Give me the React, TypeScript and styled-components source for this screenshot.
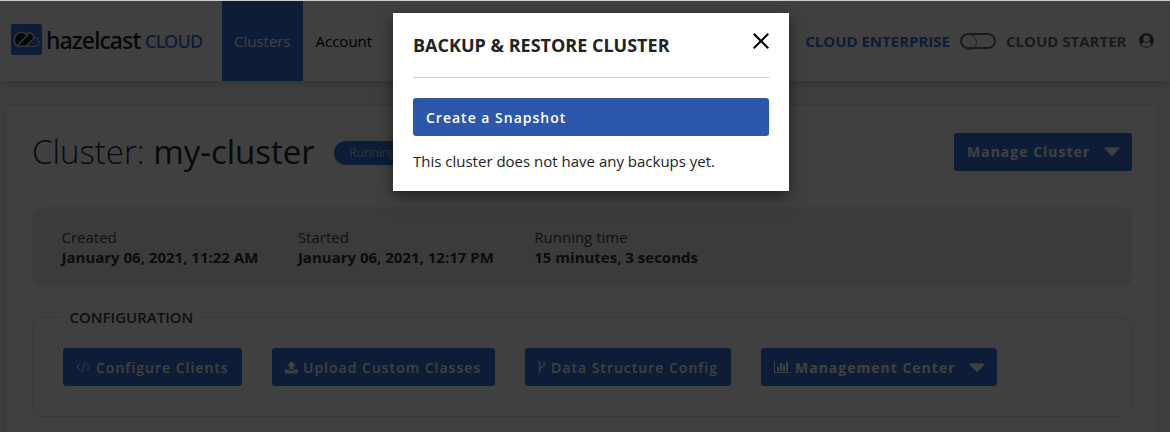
import React from "react";
import styled, { createGlobalStyle } from "styled-components";

const Global = createGlobalStyle`
  * { box-sizing: border-box; }
  body { margin: 0; background: #f7f7f7; font-family: "Open Sans", sans-serif; font-size: 15px; line-height: 20px; color: #464646; overflow: hidden; }
  h1, h2, p, dl, dt, dd, fieldset, legend { margin: 0; padding: 0; }
  button { font-family: inherit; border: 0; }
`;

const BLUE = "#3671da";

const Page = styled.div`
  height: 432px;
  overflow: hidden;
  background: #f7f7f7;
`;
const Header = styled.header`
  position: relative;
  height: 81px;
  padding: 1px 16.5px 0 11px;
  display: flex;
  align-items: stretch;
  background: #fff;
  box-shadow: 0 2px 10px rgba(0, 0, 0, 0.2);
`;
const Brand = styled.div`
  width: 211px;
  display: flex;
  align-items: center;
  padding-bottom: 4px;
`;
const BrandName = styled.span`
  width: 93px;
  margin-left: 4px;
  padding-top: 1px;
  font: 500 23px/28px "Noto Sans", sans-serif;
  letter-spacing: -0.9px;
  color: #12182a;
`;
const BrandSuffix = styled.span`
  margin-left: 6px;
  padding-top: 3px;
  font: 500 18px/28px "Noto Sans", sans-serif;
  letter-spacing: -0.8px;
  color: ${BLUE};
`;
const NavItem = styled.a<{ $active?: boolean }>`
  display: flex;
  align-items: center;
  width: ${(p) => (p.$active ? "81px" : "80px")};
  padding: 0 0 0 ${(p) => (p.$active ? "12px" : "12.5px")};
  font-size: 15px;
  background: ${(p) => (p.$active ? BLUE : "transparent")};
  color: ${(p) => (p.$active ? "#fff" : "#000")};
`;
const Plans = styled.div`
  margin-left: auto;
  display: flex;
  align-items: center;
  font-size: 15px;
  font-weight: 700;
`;
const Plan = styled.span<{ $active?: boolean }>`
  color: ${(p) => (p.$active ? BLUE : "#6c6c6c")};
`;
const Toggle = styled.span`
  display: block;
  width: 36px;
  height: 16px;
  margin: 0 10px;
  border: 2px solid #6c6c6c;
  border-radius: 8px;
  &::after {
    content: "";
    display: block;
    width: 14px;
    height: 14px;
    margin: -1px 0 0 -1px;
    border: 1px solid #7c7c7c;
    border-radius: 50%;
  }
`;
const Card = styled.main`
  width: 1150px;
  height: 360px;
  margin: 25px 0 0 7px;
  padding: 27px 25px 0;
  background: #fff;
  box-shadow: 0 0 8px rgba(0, 0, 0, 0.12);
`;
const TitleRow = styled.div`
  display: flex;
  align-items: flex-start;
  justify-content: space-between;
  height: 74px;
`;
const TitleGroup = styled.div`
  display: flex;
  align-items: center;
  height: 38px;
`;
const Title = styled.h1`
  font-size: 33px;
  line-height: 38px;
  font-weight: 300;
  color: #2b2b2b;
  white-space: nowrap;
  b { font-weight: 400; }
`;
const Status = styled.span`
  height: 24px;
  margin: 2px 0 0 19px;
  padding: 0 15.5px;
  border-radius: 12px;
  font-size: 12.5px;
  font-weight: 300;
  line-height: 24px;
  color: #fff;
  background: ${BLUE};
`;
const Button = styled.button<{ $width: string; $bright?: boolean; $raised?: boolean }>`
  width: ${(p) => p.$width};
  height: 38px;
  padding: 0 13px ${(p) => (p.$raised ? "1px" : "0")};
  display: flex;
  align-items: center;
  flex: none;
  border-radius: 3px;
  background: ${(p) => (p.$bright ? "#2b58ac" : BLUE)};
  color: #fff;
  font-size: 14px;
  font-weight: 600;
  letter-spacing: 1px;
  white-space: nowrap;
`;
const Strong = styled.span`
  font-weight: 700;
`;
const ButtonIcon = styled.svg`
  flex: none;
  margin-right: 5px;
`;
const Caret = styled.svg`
  flex: none;
  margin: 1px -1px 0 auto;
`;
const Info = styled.dl`
  height: 80px;
  padding: 20px 30px 0 29.5px;
  display: flex;
  border-radius: 10px;
  background: #ececec;
`;
const Fact = styled.div`
  width: 236.4px;
  dd { font-weight: 700; color: #303030; white-space: nowrap; }
`;
const Configuration = styled.fieldset`
  min-width: 0;
  height: 109px;
  margin: 21px 0 0;
  padding: 21px 30px 0;
  border: 1px solid #e2e2e2;
  border-radius: 10px;
`;
const Legend = styled.legend`
  padding: 0 7px 0 6.5px;
  font-weight: 600;
  line-height: 19px;
  color: #3c3c3c;
`;
const Actions = styled.div`
  display: flex;
  gap: 30px;
`;
const Backdrop = styled.div`
  position: absolute;
  inset: 0;
  height: 432px;
  padding-top: 13px;
  display: flex;
  align-items: flex-start;
  justify-content: center;
  background: rgba(0, 0, 0, 0.75);
`;
const TopEdge = styled.div`
  position: absolute;
  top: 0;
  left: 0;
  right: 0;
  height: 1px;
  background: #c9cfd2;
`;
const Dialog = styled.section`
  width: 396px;
  height: 178px;
  margin-right: -12px;
  padding: 0 20px;
  background: #fff;
  box-shadow: 0 5px 14px rgba(0, 0, 0, 0.5);
`;
const DialogHeader = styled.div`
  height: 65px;
  display: flex;
  align-items: center;
  justify-content: space-between;
  border-bottom: 1px solid #ccc;
  margin-bottom: 20px;
  svg { margin: 0 0 9px; }
`;
const DialogTitle = styled.h2`
  font-size: 18px;
  font-weight: 700;
  line-height: 24px;
  color: #222;
`;
const Message = styled.p`
  margin-top: 15px;
  font-size: 15px;
  color: #222;
`;

const Logo = () => (
  <svg width="31" height="31" viewBox="0 0 31 31">
    <rect width="31" height="31" rx="2" fill={BLUE} />
    <path d="M8.500 22.200A5.500 5.500 0 0 1 3.400 16.500c0-4.500 3-8.200 7.300-8.200 2 0 3.300.6 4.500 1.700 2.800-2.400 7.300-.8 8 3.700 2.700.2 4.500 1.900 4.500 4.200 0 2.500-2 4.300-4.500 4.300Z" fill="#12182a" stroke="#d8d8d8" strokeWidth="1.500" />
    <path d="M17.500 21.500 24 14.500c2.200.3 3 1.600 3 3.400 0 2.100-1.500 3.600-3.700 3.600Z" fill={BLUE} />
    <path d="M6.500 21.500 17.500 10M15 22.200l8.500-8.700" stroke="#d8d8d8" strokeWidth="1.500" />
  </svg>
);
const CodeIcon = () => (
  <ButtonIcon width="15" height="12" viewBox="0 0 15 12" fill="none" stroke="#fff" strokeWidth="1">
    <path d="M4.500 2.500 1 6l3.500 3.500M10.500 2.500 14 6l-3.500 3.500M9 .8 6 11.200" />
  </ButtonIcon>
);
const UploadIcon = () => (
  <ButtonIcon width="13" height="13" viewBox="0 0 13 13" fill="#fff">
    <path d="M6.500 0 11 4.700H8.500V8.500h-4V4.700H2ZM0 8.500h3.500c.3.800.8 1.200 1.500 1.200h3c.7 0 1.200-.4 1.500-1.200H13v4H0Z" />
    <path d="M9 10.700h1v.8H9ZM11 10.700h1v.8h-1Z" fill={BLUE} />
  </ButtonIcon>
);
const ForkIcon = () => (
  <ButtonIcon width="8" height="12" viewBox="0 0 8 12" fill="none" stroke="#fff">
    <circle cx="1.600" cy="1.600" r="1" />
    <circle cx="6.400" cy="2.100" r="1" />
    <circle cx="1.600" cy="10.400" r="1" />
    <path d="M1.600 2.600v6.800M6.400 3.100c0 3.200-4.400 2.400-4.800 5.500" strokeWidth="1.300" />
  </ButtonIcon>
);
const ChartIcon = () => (
  <ButtonIcon width="16" height="12" viewBox="0 0 16 12" fill="#fff">
    <path d="M0 0h1v11h15v1H0ZM3 6h2v4H3ZM6 2h2v8H6ZM9 4h2v6H9ZM12 1h2v9h-2Z" />
  </ButtonIcon>
);
const CaretIcon = () => (
  <Caret width="16" height="10" viewBox="0 0 16 10">
    <path d="M1.200.5h13.600c.8 0 1 .7.500 1.200L8.700 8.500c-.4.500-1 .500-1.400 0L.7 1.700C.2 1.200.4.500 1.200.5Z" fill="#fff" />
  </Caret>
);
const UserIcon = () => (
  <svg width="15" height="15" viewBox="0 0 15 15">
    <circle cx="7.500" cy="7.500" r="7.300" fill="#484848" />
    <circle cx="7.500" cy="5.700" r="3.300" fill="#fff" />
    <path d="M2.600 11.800c.5-1.700 1.300-2.500 2.400-2.700 1.500 1.100 3.500 1.100 5 0 1.100.2 1.900 1 2.400 2.700a6.400 6.400 0 0 1-9.800 0Z" fill="#fff" />
  </svg>
);
const CloseIcon = () => (
  <svg width="16" height="16" viewBox="0 0 16 16">
    <path d="M.7.7l14.600 14.600M15.300.7.7 15.300" stroke="#000" strokeWidth="2" />
  </svg>
);
const UserSlot = styled.span`
  display: flex;
  margin: -1px 0 0 12px;
`;

export default function App() {
  return (
    <>
      <Global />
      <Page>
        <Header>
          <Brand>
            <Logo />
            <BrandName>hazelcast</BrandName>
            <BrandSuffix>CLOUD</BrandSuffix>
          </Brand>
          <NavItem $active>Clusters</NavItem>
          <NavItem>Account</NavItem>
          <Plans>
            <Plan $active>CLOUD ENTERPRISE</Plan>
            <Toggle />
            <Plan>CLOUD STARTER</Plan>
            <UserSlot><UserIcon /></UserSlot>
          </Plans>
        </Header>
        <Card>
          <TitleRow>
            <TitleGroup>
              <Title>Cluster: <b>my-cluster</b></Title>
              <Status>Running</Status>
            </TitleGroup>
            <Button $width="178px" $raised><Strong>Manage Cluster</Strong><CaretIcon /></Button>
          </TitleRow>
          <Info>
            <Fact><dt>Created</dt><dd>January 06, 2021, 11:22 AM</dd></Fact>
            <Fact><dt>Started</dt><dd>January 06, 2021, 12:17 PM</dd></Fact>
            <Fact><dt>Running time</dt><dd>15 minutes, 3 seconds</dd></Fact>
          </Info>
          <Configuration>
            <Legend>CONFIGURATION</Legend>
            <Actions>
              <Button $width="179px"><CodeIcon />Configure Clients</Button>
              <Button $width="223px"><UploadIcon />Upload Custom Classes</Button>
              <Button $width="206px"><ForkIcon />Data Structure Config</Button>
              <Button $width="236px"><ChartIcon /><Strong>Management Center</Strong><CaretIcon /></Button>
            </Actions>
          </Configuration>
        </Card>
      </Page>
      <Backdrop>
        <Dialog>
          <DialogHeader>
            <DialogTitle>BACKUP &amp; RESTORE CLUSTER</DialogTitle>
            <CloseIcon />
          </DialogHeader>
          <Button $width="100%" $bright>Create a Snapshot</Button>
          <Message>This cluster does not have any backups yet.</Message>
        </Dialog>
      </Backdrop>
      <TopEdge />
    </>
  );
}
